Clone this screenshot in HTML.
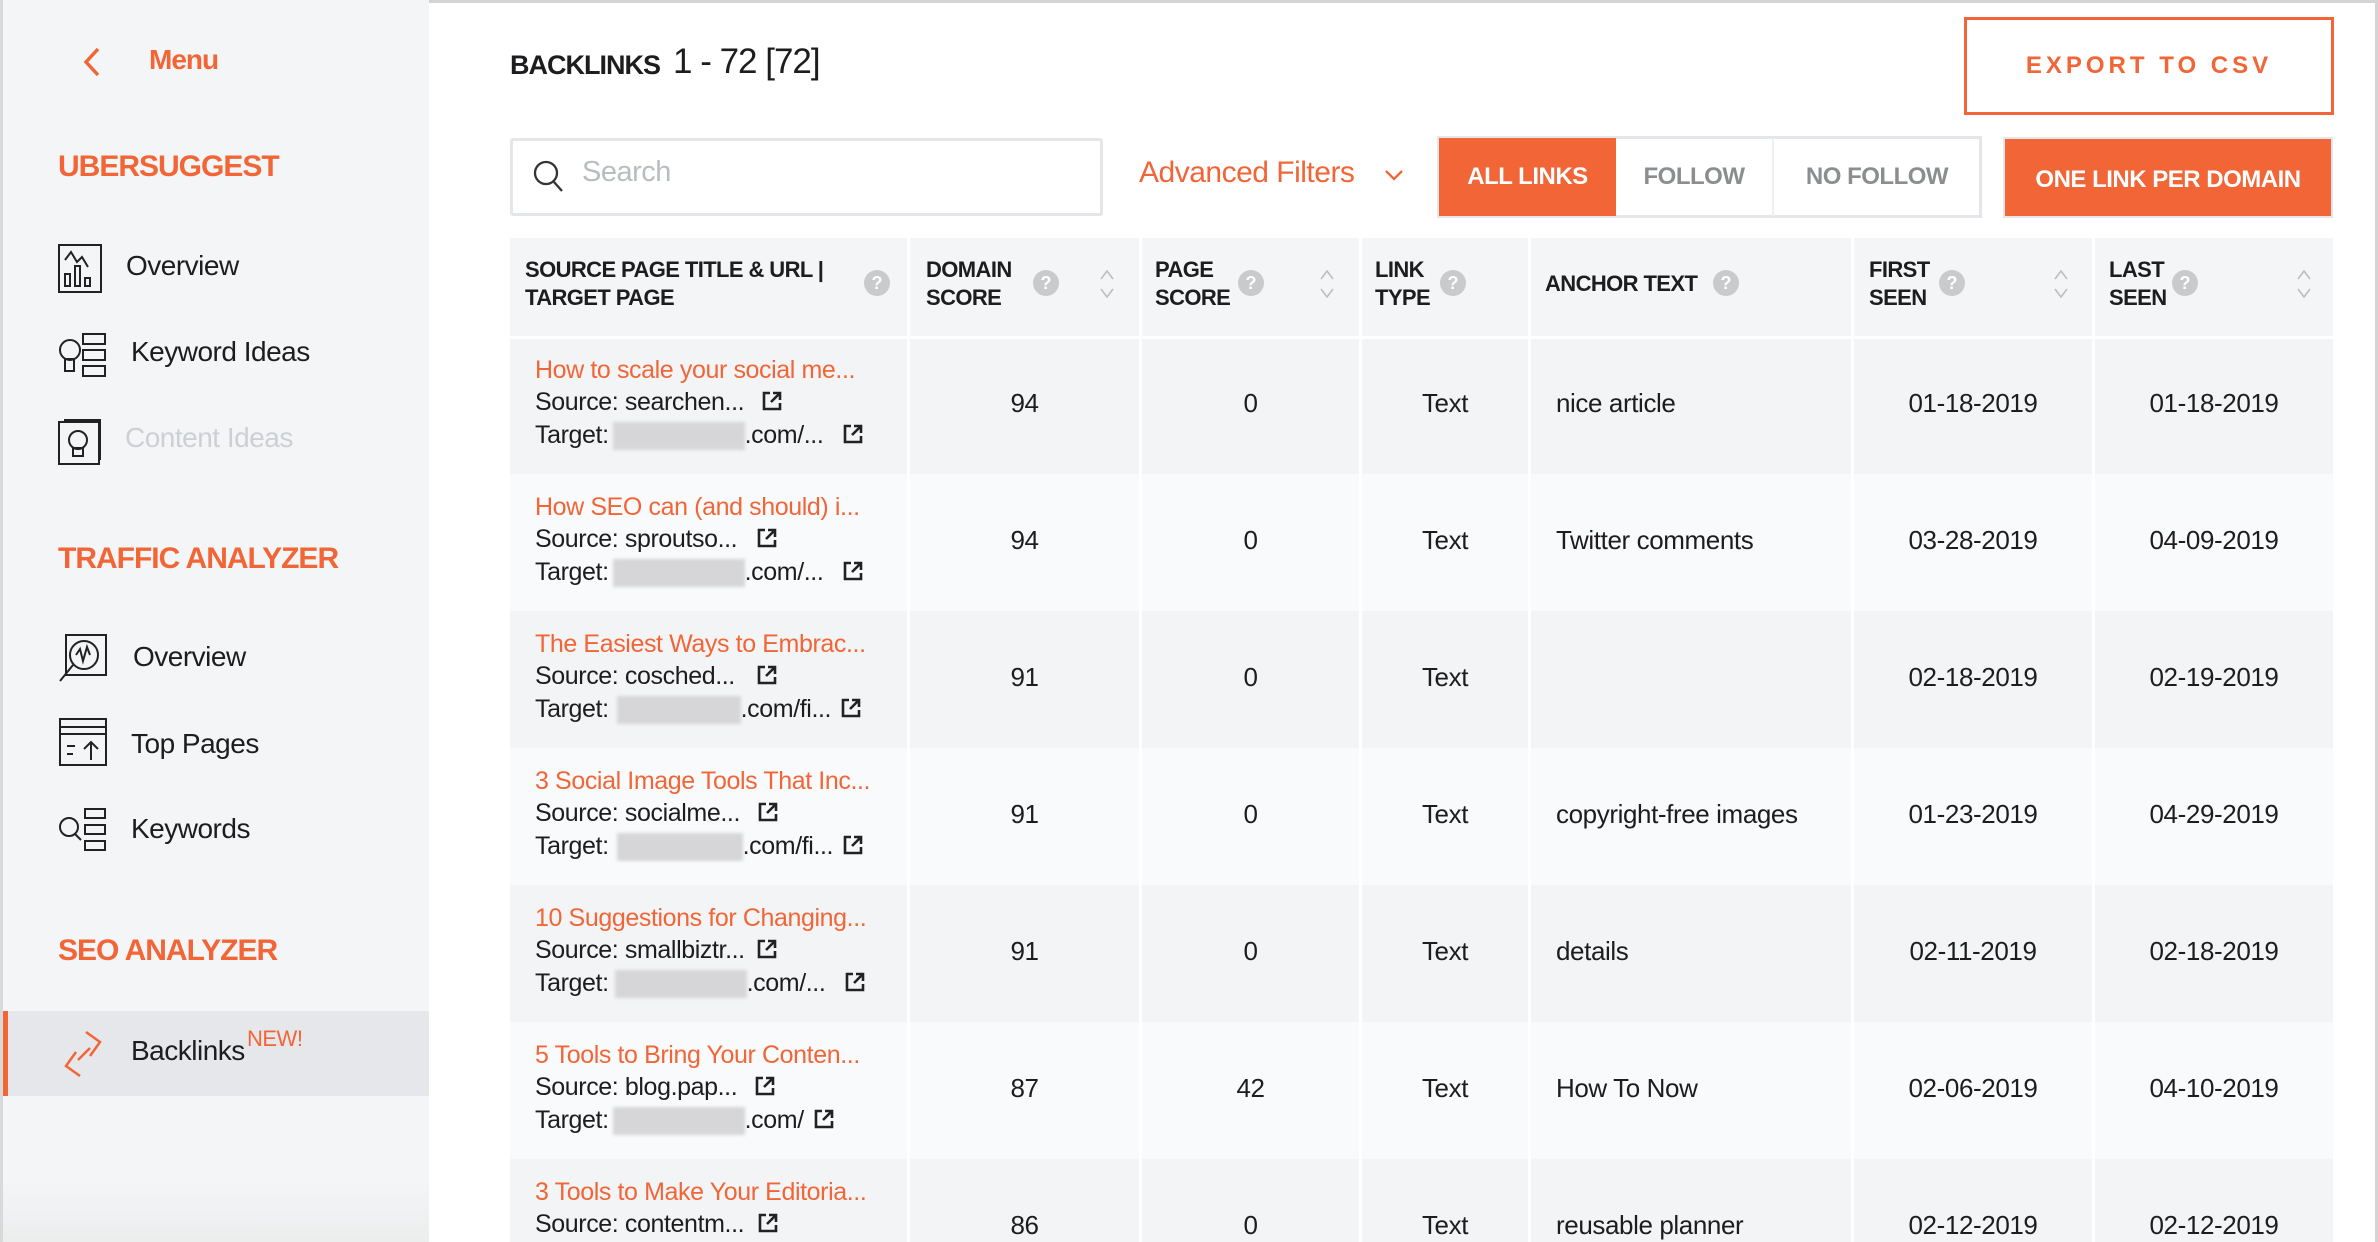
<!DOCTYPE html>
<html><head><meta charset="utf-8"><style>
*{margin:0;padding:0;box-sizing:border-box}
body{width:2378px;height:1242px;overflow:hidden;background:#fff;font-family:"Liberation Sans",sans-serif;color:#1d1d1f;position:relative}
.a{position:absolute;white-space:nowrap}
.side{position:absolute;left:0;top:0;width:429px;height:1242px;background:#f4f5f7;border-left:3px solid #d9d9d9}
.h{font-weight:bold;color:#f16536;font-size:30px;letter-spacing:-1px}
.nav{font-size:28px;letter-spacing:-0.5px;line-height:34px}
.th{font-weight:bold;font-size:22px;line-height:28px;letter-spacing:-0.6px;color:#1d1d1f}
.q{position:absolute;width:26px;height:26px;border-radius:50%;background:#c9cacc;color:#fff;font-size:18px;text-align:center;line-height:26px;font-weight:bold}
.c{font-size:25px;line-height:30px;letter-spacing:-0.4px}
.t{color:#f16536}
.blur{display:inline-block;width:132px;height:28px;background:#d6d6d8;vertical-align:middle;filter:blur(1.5px)}
.ext{display:inline-block;width:20px;height:20px;vertical-align:-1px;margin-left:14px}
.sep{position:absolute;top:238px;width:3px;height:1004px;background:#fff}
.btn{position:absolute;font-weight:bold;font-size:24px;text-align:center}
</style></head><body>
<div style="position:absolute;left:0;top:0;width:2378px;height:3px;background:#d4d4d4"></div>
<div style="position:absolute;right:0;top:0;width:3px;height:1242px;background:#d4d4d4"></div>
<div class="side">
 <svg class="a" style="left:78px;top:46px" width="22" height="32" viewBox="0 0 22 32"><path d="M17 3L5 16l12 13" stroke="#f16536" stroke-width="3.5" fill="none"/></svg>
 <div class="a h" style="left:146px;top:44px;font-size:28px">Menu</div>
 <div class="a h" style="left:55px;top:150px">UBERSUGGEST</div>
 <svg class="a" style="left:55px;top:244px" width="46" height="50" viewBox="0 0 46 50"><rect x="1" y="1" width="42" height="47" fill="none" stroke="#222" stroke-width="2"/><path d="M7 16l6-8 6 10 5-5 6 10" fill="none" stroke="#222" stroke-width="2"/><rect x="7" y="30" width="5" height="12" fill="none" stroke="#222" stroke-width="2"/><rect x="17" y="22" width="5" height="20" fill="none" stroke="#222" stroke-width="2"/><rect x="27" y="34" width="5" height="8" fill="none" stroke="#222" stroke-width="2"/></svg>
 <div class="a nav" style="left:123px;top:249px">Overview</div>
 <svg class="a" style="left:55px;top:332px" width="52" height="48" viewBox="0 0 52 48"><circle cx="12" cy="18" r="10" fill="none" stroke="#222" stroke-width="2"/><rect x="7" y="27" width="9" height="12" fill="none" stroke="#222" stroke-width="2"/><rect x="25" y="2" width="22" height="10" fill="none" stroke="#222" stroke-width="2"/><rect x="25" y="18" width="22" height="10" fill="none" stroke="#222" stroke-width="2"/><rect x="25" y="34" width="22" height="10" fill="none" stroke="#222" stroke-width="2"/></svg>
 <div class="a nav" style="left:128px;top:335px">Keyword Ideas</div>
 <svg class="a" style="left:55px;top:416px" width="46" height="50" viewBox="0 0 46 50"><rect x="1" y="6" width="40" height="42" fill="none" stroke="#222" stroke-width="2"/><path d="M6 4h36v40" fill="none" stroke="#222" stroke-width="2"/><circle cx="20" cy="24" r="9" fill="none" stroke="#222" stroke-width="2"/><rect x="15" y="32" width="10" height="8" fill="none" stroke="#222" stroke-width="2"/></svg>
 <div class="a nav" style="left:122px;top:421px;color:#cdd0d3">Content Ideas</div>
 <div class="a h" style="left:55px;top:542px">TRAFFIC ANALYZER</div>
 <svg class="a" style="left:55px;top:633px" width="52" height="50" viewBox="0 0 52 50"><rect x="8" y="2" width="40" height="40" fill="none" stroke="#222" stroke-width="2"/><circle cx="26" cy="22" r="14" fill="none" stroke="#222" stroke-width="2"/><path d="M18 22l4-6 3 12 4-14 3 8" fill="none" stroke="#222" stroke-width="2"/><path d="M15 32L2 48" stroke="#222" stroke-width="2"/></svg>
 <div class="a nav" style="left:130px;top:640px">Overview</div>
 <svg class="a" style="left:56px;top:718px" width="50" height="50" viewBox="0 0 50 50"><rect x="1" y="1" width="46" height="46" fill="none" stroke="#222" stroke-width="2"/><path d="M1 9h46M1 16h46" stroke="#222" stroke-width="2"/><path d="M8 28h8M8 36h6M32 42V24M25 31l7-7 7 7" fill="none" stroke="#222" stroke-width="2"/></svg>
 <div class="a nav" style="left:128px;top:727px">Top Pages</div>
 <svg class="a" style="left:55px;top:807px" width="52" height="46" viewBox="0 0 52 46"><circle cx="11" cy="20" r="9" fill="none" stroke="#222" stroke-width="2"/><path d="M17 27l6 6" stroke="#222" stroke-width="2"/><rect x="27" y="2" width="20" height="9" fill="none" stroke="#222" stroke-width="2"/><rect x="27" y="18" width="20" height="9" fill="none" stroke="#222" stroke-width="2"/><rect x="27" y="34" width="20" height="9" fill="none" stroke="#222" stroke-width="2"/></svg>
 <div class="a nav" style="left:128px;top:812px">Keywords</div>
 <div class="a h" style="left:55px;top:934px">SEO ANALYZER</div>
 <div style="position:absolute;left:0;top:1002px;width:426px;height:70px;background:#e5e7eb;border-left:5px solid #f16536;top:1011px;height:85px"></div>
 <svg class="a" style="left:55px;top:1026px" width="52" height="56" viewBox="0 0 52 56"><path d="M28 6l14 10-10 14M22 50L8 40l10-14M20 34l12-12" fill="none" stroke="#f16536" stroke-width="2.5"/></svg>
 <div class="a nav" style="left:128px;top:1034px">Backlinks</div>
 <div class="a" style="left:244px;top:1026px;color:#f16536;font-size:22px;letter-spacing:-0.5px">NEW!</div>
 <div style="position:absolute;left:0;top:1180px;width:426px;height:62px;background:linear-gradient(#f4f5f7,#eceded)"></div>
</div>

<div class="a" style="left:510px;top:47px;font-weight:bold;font-size:27px;letter-spacing:-1px;line-height:36px">BACKLINKS</div>
<div class="a" style="left:673px;top:42px;font-size:35px;letter-spacing:-1px;line-height:40px">1 - 72 [72]</div>
<div style="position:absolute;left:1964px;top:17px;width:370px;height:98px;border:3px solid #f16536;color:#f16536;font-weight:bold;font-size:24px;letter-spacing:4px;text-align:center;line-height:92px">EXPORT TO CSV</div>

<div style="position:absolute;left:510px;top:138px;width:593px;height:78px;border:3px solid #e4e6ea;border-radius:3px"></div>
<svg class="a" style="left:532px;top:159px" width="34" height="36" viewBox="0 0 34 36"><circle cx="14" cy="14" r="11" fill="none" stroke="#333" stroke-width="2.3"/><path d="M22 23l8 9" stroke="#333" stroke-width="2.3"/></svg>
<div class="a" style="left:582px;top:156px;font-size:29px;color:#b9bcc0;letter-spacing:-0.5px">Search</div>
<div class="a" style="left:1139px;top:156px;font-size:30px;color:#f16536;letter-spacing:-0.5px">Advanced Filters</div>
<svg class="a" style="left:1384px;top:168px" width="20" height="14" viewBox="0 0 20 14"><path d="M2 3l8 8 8-8" fill="none" stroke="#f16536" stroke-width="2.3"/></svg>

<div style="position:absolute;left:1437px;top:136px;width:545px;height:82px;border:3px solid #e4e6ea"></div>
<div class="btn" style="left:1439px;top:138px;width:177px;height:78px;background:#f16536;color:#fff;line-height:78px;letter-spacing:-0.5px">ALL LINKS</div>
<div class="btn" style="left:1616px;top:138px;width:158px;height:78px;color:#8b8d90;line-height:78px;border-right:2px solid #eceef0;letter-spacing:-0.5px">FOLLOW</div>
<div class="btn" style="left:1774px;top:138px;width:206px;height:78px;color:#8b8d90;line-height:78px;letter-spacing:-0.5px">NO FOLLOW</div>
<div class="btn" style="left:2003px;top:137px;width:330px;height:81px;background:#f16536;color:#fff;line-height:81px;border:2px solid #e4e6ea;letter-spacing:-0.5px">ONE LINK PER DOMAIN</div>

<div style="position:absolute;left:510px;top:238px;width:1823px;height:99px;background:#f4f5f7"></div>
<div id="rows"></div>
<div style="position:absolute;left:510px;top:337px;width:1823px;height:137px;background:#f3f4f6"></div>
<div style="position:absolute;left:510px;top:474px;width:1823px;height:137px;background:#f9fafb"></div>
<div style="position:absolute;left:510px;top:611px;width:1823px;height:137px;background:#f3f4f6"></div>
<div style="position:absolute;left:510px;top:748px;width:1823px;height:137px;background:#f9fafb"></div>
<div style="position:absolute;left:510px;top:885px;width:1823px;height:137px;background:#f3f4f6"></div>
<div style="position:absolute;left:510px;top:1022px;width:1823px;height:137px;background:#f9fafb"></div>
<div style="position:absolute;left:510px;top:1159px;width:1823px;height:83px;background:#f3f4f6"></div>
<div style="position:absolute;left:510px;top:336px;width:1823px;height:3px;background:#fff"></div>
<div class="sep" style="left:907px"></div><div class="sep" style="left:1139px"></div><div class="sep" style="left:1359px"></div><div class="sep" style="left:1528px"></div><div class="sep" style="left:1851px"></div><div class="sep" style="left:2092px"></div>

<div class="a th" style="left:525px;top:256px">SOURCE PAGE TITLE &amp; URL |<br>TARGET PAGE</div><div class="q" style="left:864px;top:270px">?</div>
<div class="a th" style="left:926px;top:256px">DOMAIN<br>SCORE</div><div class="q" style="left:1033px;top:270px">?</div>
<div class="a th" style="left:1155px;top:256px">PAGE<br>SCORE</div><div class="q" style="left:1238px;top:270px">?</div>
<div class="a th" style="left:1375px;top:256px">LINK<br>TYPE</div><div class="q" style="left:1440px;top:270px">?</div>
<div class="a th" style="left:1545px;top:270px">ANCHOR TEXT</div><div class="q" style="left:1713px;top:270px">?</div>
<div class="a th" style="left:1869px;top:256px">FIRST<br>SEEN</div><div class="q" style="left:1939px;top:270px">?</div>
<div class="a th" style="left:2109px;top:256px">LAST<br>SEEN</div><div class="q" style="left:2172px;top:270px">?</div>
<svg class="a" style="left:1099px;top:268px" width="16" height="32" viewBox="0 0 16 32"><path d="M2 11l6-8 6 8M2 21l6 8 6-8" fill="none" stroke="#bbb" stroke-width="1.5"/></svg>
<svg class="a" style="left:1319px;top:268px" width="16" height="32" viewBox="0 0 16 32"><path d="M2 11l6-8 6 8M2 21l6 8 6-8" fill="none" stroke="#bbb" stroke-width="1.5"/></svg>
<svg class="a" style="left:2053px;top:268px" width="16" height="32" viewBox="0 0 16 32"><path d="M2 11l6-8 6 8M2 21l6 8 6-8" fill="none" stroke="#bbb" stroke-width="1.5"/></svg>
<svg class="a" style="left:2296px;top:268px" width="16" height="32" viewBox="0 0 16 32"><path d="M2 11l6-8 6 8M2 21l6 8 6-8" fill="none" stroke="#bbb" stroke-width="1.5"/></svg>

<svg width="0" height="0" style="position:absolute"><defs><symbol id="e" viewBox="0 0 20 20"><path d="M8 2H2v16h16v-6" fill="none" stroke="#222" stroke-width="2.6"/><path d="M11 2h7v7M18 2l-9 9" fill="none" stroke="#222" stroke-width="2.6"/></symbol></defs></svg>

<!-- row 1 -->
<div class="a c t" style="left:535px;top:355px">How to scale your social me...</div>
<div class="a c" style="left:535px;top:387px">Source: searchen...<svg class="ext" style="margin-left:18px"><use href="#e"/></svg></div>
<div class="a c" style="left:535px;top:420px">Target:<span class="blur" style="margin-left:4px"></span>.com/...<svg class="ext" style="margin-left:20px"><use href="#e"/></svg></div>
<!-- row 2 -->
<div class="a c t" style="left:535px;top:492px">How SEO can (and should) i...</div>
<div class="a c" style="left:535px;top:524px">Source: sproutso...<svg class="ext" style="margin-left:20px"><use href="#e"/></svg></div>
<div class="a c" style="left:535px;top:557px">Target:<span class="blur" style="margin-left:4px"></span>.com/...<svg class="ext" style="margin-left:20px"><use href="#e"/></svg></div>
<!-- row 3 -->
<div class="a c t" style="left:535px;top:629px">The Easiest Ways to Embrac...</div>
<div class="a c" style="left:535px;top:661px">Source: cosched...<svg class="ext" style="margin-left:22px"><use href="#e"/></svg></div>
<div class="a c" style="left:535px;top:694px">Target:<span class="blur" style="margin-left:8px;width:124px"></span>.com/fi...<svg class="ext" style="margin-left:10px"><use href="#e"/></svg></div>
<!-- row 4 -->
<div class="a c t" style="left:535px;top:766px">3 Social Image Tools That Inc...</div>
<div class="a c" style="left:535px;top:798px">Source: socialme...<svg class="ext" style="margin-left:18px"><use href="#e"/></svg></div>
<div class="a c" style="left:535px;top:831px">Target:<span class="blur" style="margin-left:8px;width:126px"></span>.com/fi...<svg class="ext" style="margin-left:10px"><use href="#e"/></svg></div>
<!-- row 5 -->
<div class="a c t" style="left:535px;top:903px">10 Suggestions for Changing...</div>
<div class="a c" style="left:535px;top:935px">Source: smallbiztr...<svg class="ext" style="margin-left:12px"><use href="#e"/></svg></div>
<div class="a c" style="left:535px;top:968px">Target:<span class="blur" style="margin-left:6px"></span>.com/...<svg class="ext" style="margin-left:20px"><use href="#e"/></svg></div>
<!-- row 6 -->
<div class="a c t" style="left:535px;top:1040px">5 Tools to Bring Your Conten...</div>
<div class="a c" style="left:535px;top:1072px">Source: blog.pap...<svg class="ext" style="margin-left:18px"><use href="#e"/></svg></div>
<div class="a c" style="left:535px;top:1105px">Target:<span class="blur" style="margin-left:4px"></span>.com/<svg class="ext" style="margin-left:10px"><use href="#e"/></svg></div>
<!-- row 7 -->
<div class="a c t" style="left:535px;top:1177px">3 Tools to Make Your Editoria...</div>
<div class="a c" style="left:535px;top:1209px">Source: contentm...<svg class="ext" style="margin-left:14px"><use href="#e"/></svg></div>

<div style="position:absolute;left:910px;top:0;width:1423px;font-size:26px;letter-spacing:-0.4px">
 <div class="a" style="left:0;top:388px;width:229px;text-align:center">94</div>
 <div class="a" style="left:232px;top:388px;width:217px;text-align:center">0</div>
 <div class="a" style="left:452px;top:388px;width:166px;text-align:center">Text</div>
 <div class="a" style="left:646px;top:388px">nice article</div>
 <div class="a" style="left:944px;top:388px;width:238px;text-align:center">01-18-2019</div>
 <div class="a" style="left:1185px;top:388px;width:238px;text-align:center">01-18-2019</div>

 <div class="a" style="left:0;top:525px;width:229px;text-align:center">94</div>
 <div class="a" style="left:232px;top:525px;width:217px;text-align:center">0</div>
 <div class="a" style="left:452px;top:525px;width:166px;text-align:center">Text</div>
 <div class="a" style="left:646px;top:525px">Twitter comments</div>
 <div class="a" style="left:944px;top:525px;width:238px;text-align:center">03-28-2019</div>
 <div class="a" style="left:1185px;top:525px;width:238px;text-align:center">04-09-2019</div>

 <div class="a" style="left:0;top:662px;width:229px;text-align:center">91</div>
 <div class="a" style="left:232px;top:662px;width:217px;text-align:center">0</div>
 <div class="a" style="left:452px;top:662px;width:166px;text-align:center">Text</div>
 <div class="a" style="left:944px;top:662px;width:238px;text-align:center">02-18-2019</div>
 <div class="a" style="left:1185px;top:662px;width:238px;text-align:center">02-19-2019</div>

 <div class="a" style="left:0;top:799px;width:229px;text-align:center">91</div>
 <div class="a" style="left:232px;top:799px;width:217px;text-align:center">0</div>
 <div class="a" style="left:452px;top:799px;width:166px;text-align:center">Text</div>
 <div class="a" style="left:646px;top:799px">copyright-free images</div>
 <div class="a" style="left:944px;top:799px;width:238px;text-align:center">01-23-2019</div>
 <div class="a" style="left:1185px;top:799px;width:238px;text-align:center">04-29-2019</div>

 <div class="a" style="left:0;top:936px;width:229px;text-align:center">91</div>
 <div class="a" style="left:232px;top:936px;width:217px;text-align:center">0</div>
 <div class="a" style="left:452px;top:936px;width:166px;text-align:center">Text</div>
 <div class="a" style="left:646px;top:936px">details</div>
 <div class="a" style="left:944px;top:936px;width:238px;text-align:center">02-11-2019</div>
 <div class="a" style="left:1185px;top:936px;width:238px;text-align:center">02-18-2019</div>

 <div class="a" style="left:0;top:1073px;width:229px;text-align:center">87</div>
 <div class="a" style="left:232px;top:1073px;width:217px;text-align:center">42</div>
 <div class="a" style="left:452px;top:1073px;width:166px;text-align:center">Text</div>
 <div class="a" style="left:646px;top:1073px">How To Now</div>
 <div class="a" style="left:944px;top:1073px;width:238px;text-align:center">02-06-2019</div>
 <div class="a" style="left:1185px;top:1073px;width:238px;text-align:center">04-10-2019</div>

 <div class="a" style="left:0;top:1210px;width:229px;text-align:center">86</div>
 <div class="a" style="left:232px;top:1210px;width:217px;text-align:center">0</div>
 <div class="a" style="left:452px;top:1210px;width:166px;text-align:center">Text</div>
 <div class="a" style="left:646px;top:1210px">reusable planner</div>
 <div class="a" style="left:944px;top:1210px;width:238px;text-align:center">02-12-2019</div>
 <div class="a" style="left:1185px;top:1210px;width:238px;text-align:center">02-12-2019</div>
</div>
</body></html>
